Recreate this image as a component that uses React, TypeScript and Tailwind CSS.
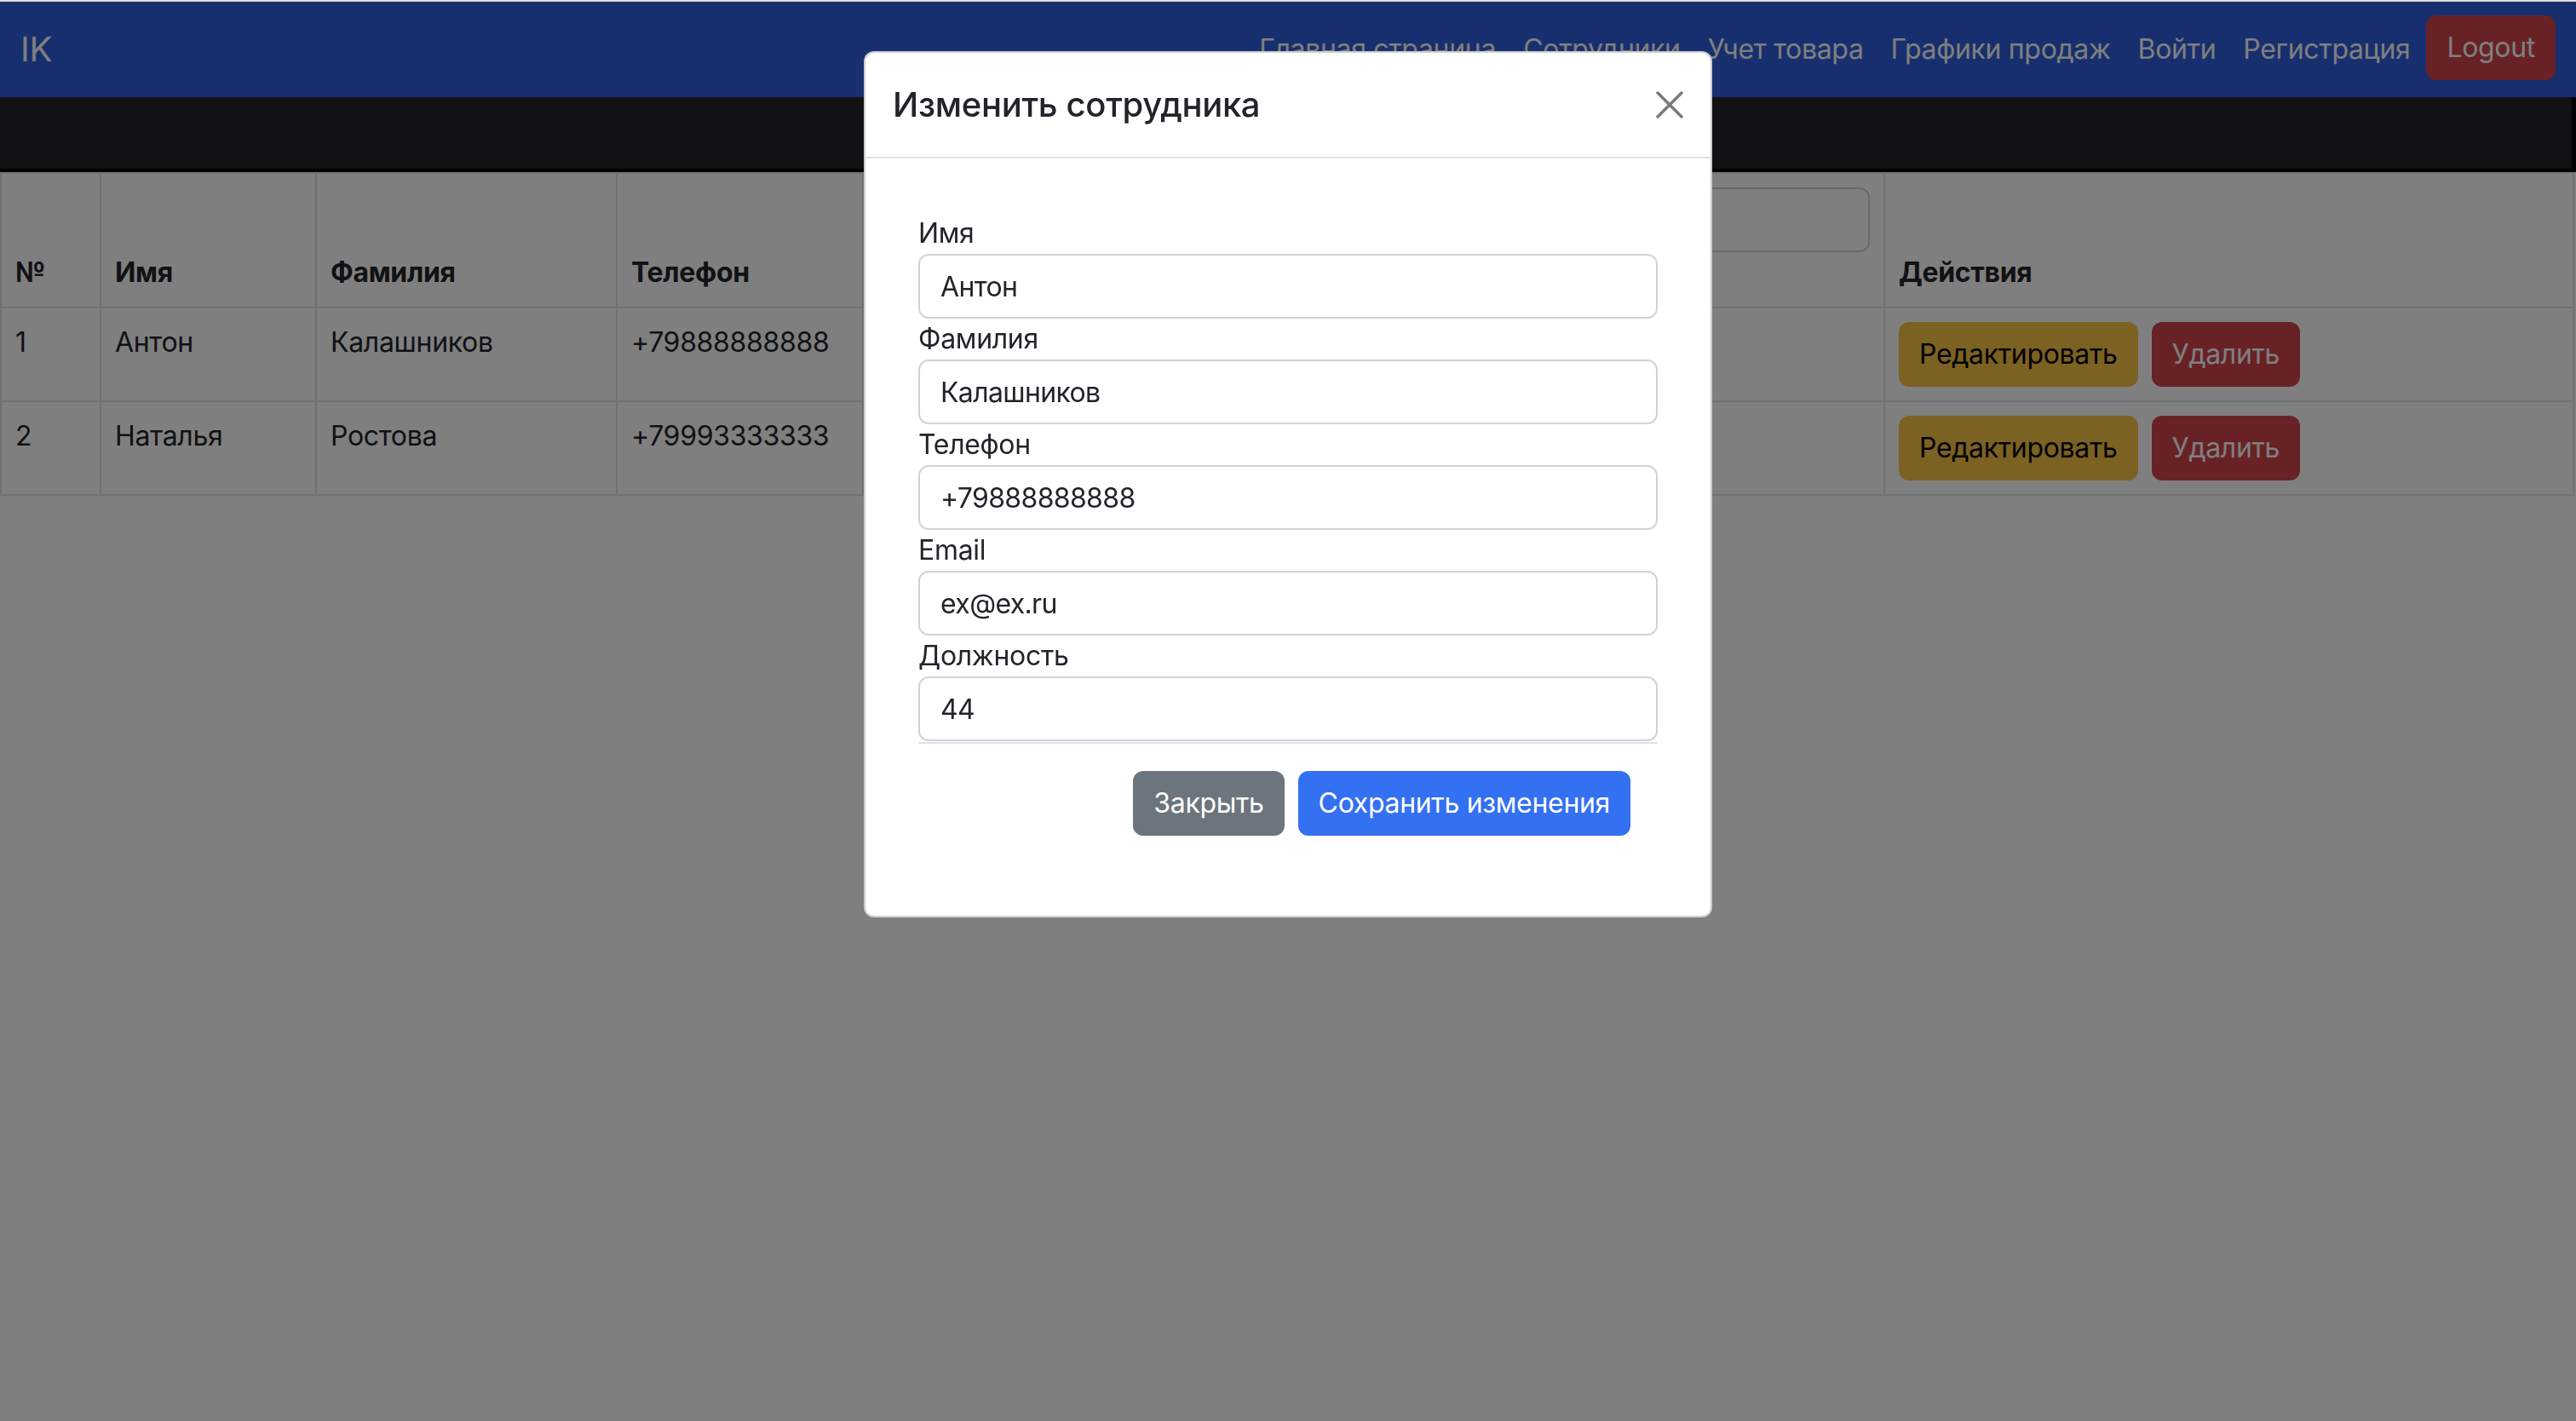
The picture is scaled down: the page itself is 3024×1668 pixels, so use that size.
import React from 'react';

interface Employee {
  id: number;
  firstName: string;
  lastName: string;
  phone: string;
}

const employees: Employee[] = [
  { id: 1, firstName: 'Антон', lastName: 'Калашников', phone: '+79888888888' },
  { id: 2, firstName: 'Наталья', lastName: 'Ростова', phone: '+79993333333' },
];

const navItems = ['Главная страница', 'Сотрудники', 'Учет товара', 'Графики продаж', 'Войти', 'Регистрация'];

const fields = [
  { label: 'Имя', value: 'Антон' },
  { label: 'Фамилия', value: 'Калашников' },
  { label: 'Телефон', value: '+79888888888' },
  { label: 'Email', value: 'ex@ex.ru' },
  { label: 'Должность', value: '44' },
];

const cell = 'border-2 border-[#dee2e6] px-[16px] py-[16px]';

const EditModal: React.FC = () => (
  <div className="fixed inset-x-0 top-[2px] bottom-0 bg-black/50 flex flex-col items-center pt-[58px]">
    <div className="w-[996px] bg-white rounded-[12px] border-2 border-black/20 text-[#212529]">
      {/* Header */}
      <div className="h-[124px] px-[32px] flex items-center justify-between border-b-2 border-[#dee2e6]">
        <h5 className="text-[40px] leading-[60px] font-medium">Изменить сотрудника</h5>
        <button className="w-[32px] h-[32px] flex items-center justify-center">
          <svg width="32" height="32" viewBox="0 0 32 32">
            <path d="M2 2 L30 30 M30 2 L2 30" stroke="#7a7a7a" strokeWidth="3.5" strokeLinecap="round" />
          </svg>
        </button>
      </div>

      {/* Body */}
      <div className="pt-[64px] px-[62px] pb-[62px]">
        <form>
          {fields.map((f) => (
            <div key={f.label}>
              <label className="block text-[32px] leading-[48px]">{f.label}</label>
              <input
                readOnly
                value={f.value}
                className="block w-full h-[76px] px-[24px] text-[32px] tracking-[-0.02em] text-[#212529] border-2 border-[#ced4da] rounded-[12px] outline-none"
              />
            </div>
          ))}
          <div className="mt-[1px] border-t-2 border-[#dee2e6] pt-[32px] pr-[32px] pb-[32px] flex justify-end gap-[16px]">
            <button type="button" className="h-[76px] px-[24px] rounded-[12px] bg-[#6c757d] text-white text-[32px]">
              Закрыть
            </button>
            <button type="button" className="h-[76px] px-[24px] rounded-[12px] bg-[#3470f2] text-white text-[32px]">
              Сохранить изменения
            </button>
          </div>
        </form>
      </div>
    </div>
  </div>
);

export default function App() {
  return (
    <div className="min-h-screen bg-white font-['Inter','Noto_Sans',sans-serif] tracking-[-0.02em] text-[#212529]">
      <div className="h-[2px] bg-[#dcdcdc]" />

      {/* Navbar */}
      <nav className="h-[112px] bg-[#2e5edc] px-[24px] flex items-center justify-between">
        <span className="text-[40px] leading-[60px] text-white">IK</span>
        <div className="flex items-center">
          <ul className="flex items-center">
            {navItems.map((item) => (
              <li key={item}>
                <a className="block px-[16px] py-[16px] text-[32px] leading-[48px] text-white">{item}</a>
              </li>
            ))}
          </ul>
          <button className="ml-[3px] mb-[4px] h-[76px] px-[24px] rounded-[12px] bg-[#d0444c] text-white text-[32px]">
            Logout
          </button>
        </div>
      </nav>

      {/* Dark strip */}
      <div className="h-[88px] bg-[#222428] border-b-4 border-r-[5px] border-black" />

      {/* Table */}
      <table className="w-[3022px] table-fixed border-collapse text-[32px] leading-[48px]">
        <thead>
          <tr className="text-left">
            <th className={`${cell} w-[117px] align-bottom font-bold`}>№</th>
            <th className={`${cell} w-[253px] align-bottom font-bold`}>Имя</th>
            <th className={`${cell} w-[353px] align-bottom font-bold`}>Фамилия</th>
            <th className={`${cell} w-[289px] align-bottom font-bold`}>Телефон</th>
            <th className={`${cell} w-[600px] align-bottom`} />
            <th className={`${cell} w-[599px] align-bottom`}>
              <input className="block w-full h-[76px] border-2 border-[#ced4da] rounded-[12px] bg-white" />
              <div className="h-[48px]" />
            </th>
            <th className={`${cell} align-bottom font-bold`}>Действия</th>
          </tr>
        </thead>
        <tbody>
          {employees.map((e) => (
            <tr key={e.id}>
              <td className={`${cell} align-top`}>{e.id}</td>
              <td className={`${cell} align-top`}>{e.firstName}</td>
              <td className={`${cell} align-top`}>{e.lastName}</td>
              <td className={`${cell} align-top`}>{e.phone}</td>
              <td className={`${cell} align-top`} />
              <td className={`${cell} align-top`} />
              <td className={`${cell} align-top`}>
                <div className="flex gap-[16px]">
                  <button className="h-[76px] px-[24px] rounded-[12px] bg-[#f6c244] text-black">Редактировать</button>
                  <button className="h-[76px] px-[24px] rounded-[12px] bg-[#d0444c] text-white">Удалить</button>
                </div>
              </td>
            </tr>
          ))}
        </tbody>
      </table>

      <EditModal />
    </div>
  );
}
